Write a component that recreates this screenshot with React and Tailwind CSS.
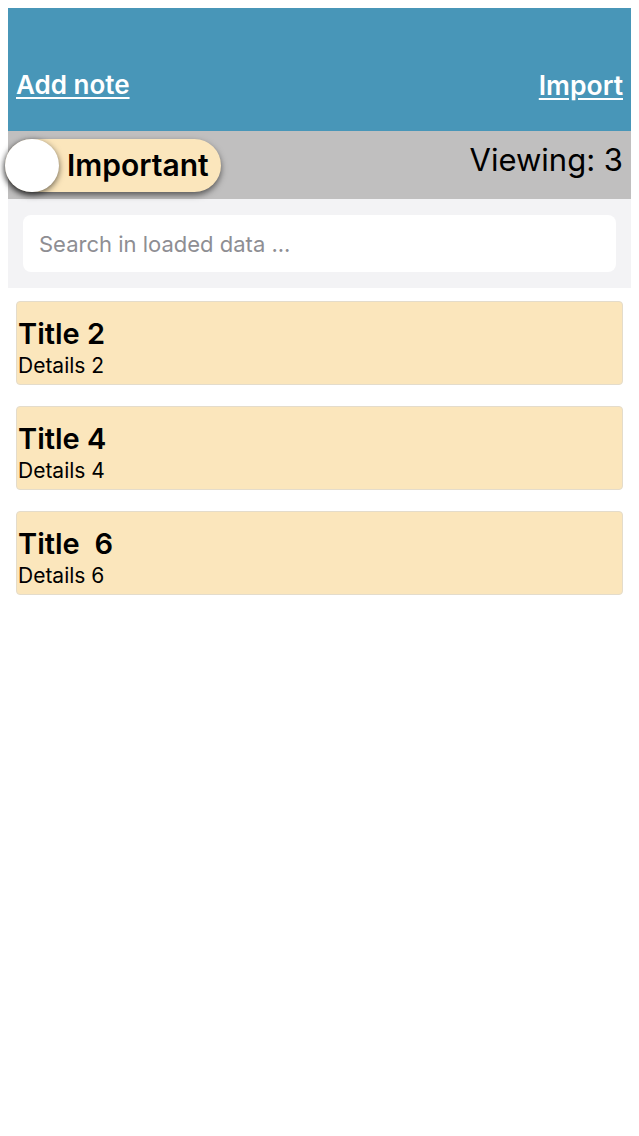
import React, { useState } from 'react';

const notes = [
  { title: 'Title 2', details: 'Details 2' },
  { title: 'Title 4', details: 'Details 4' },
  { title: 'Title  6', details: 'Details 6' },
];

const App = () => {
  const [query, setQuery] = useState('');

  return (
    <div className="min-h-screen bg-white pt-2 font-['Inter','Roboto',sans-serif] text-black">
      <div className="mx-2 flex h-[123px] items-end justify-between bg-[#4896b8] px-2 pb-[32px]">
        <a href="#" className="text-[26px] font-semibold leading-[28px] text-white underline underline-offset-[3px]">Add note</a>
        <a href="#" className="text-[26.5px] font-semibold leading-[28px] text-white underline underline-offset-[3px]">Import</a>
      </div>

      <div className="mx-2 flex h-[68px] items-start justify-between bg-[#c0bfbf] pr-2">
        <div className="-ml-[3px] mt-2 flex h-[53px] items-center rounded-full bg-[#fbe6bc] pr-3 shadow-[0_3px_6px_rgba(0,0,0,0.55)]">
          <div className="h-[53px] w-[54px] rounded-full bg-white shadow-[0_2px_6px_rgba(0,0,0,0.6)]"></div>
          <span className="ml-2 text-[30px] font-semibold">Important</span>
        </div>
        <span className="mt-[13px] text-[31px] leading-none">Viewing: 3</span>
      </div>

      <div className="mx-2 bg-[#f3f3f5] px-[15px] py-4">
        <input
          value={query}
          onChange={e => setQuery(e.target.value)}
          placeholder="Search in loaded data ..."
          className="h-[57px] w-full rounded-lg bg-white px-4 text-[22px] placeholder:text-[#8e8e93] outline-none"
        />
      </div>

      <ul className="mx-4 mt-[13px] flex flex-col gap-[21px]">
        {notes.map(n => (
          <li key={n.details} className="flex h-[84px] flex-col rounded-sm border border-[#e4dccb] bg-[#fbe6bc] px-[1px] pt-[15px]">
            <h2 className="whitespace-pre text-[29px] font-semibold leading-[34px]">{n.title}</h2>
            <p className="text-[21px] leading-[30px]">{n.details}</p>
          </li>
        ))}
      </ul>
    </div>
  );
};

export default App;
